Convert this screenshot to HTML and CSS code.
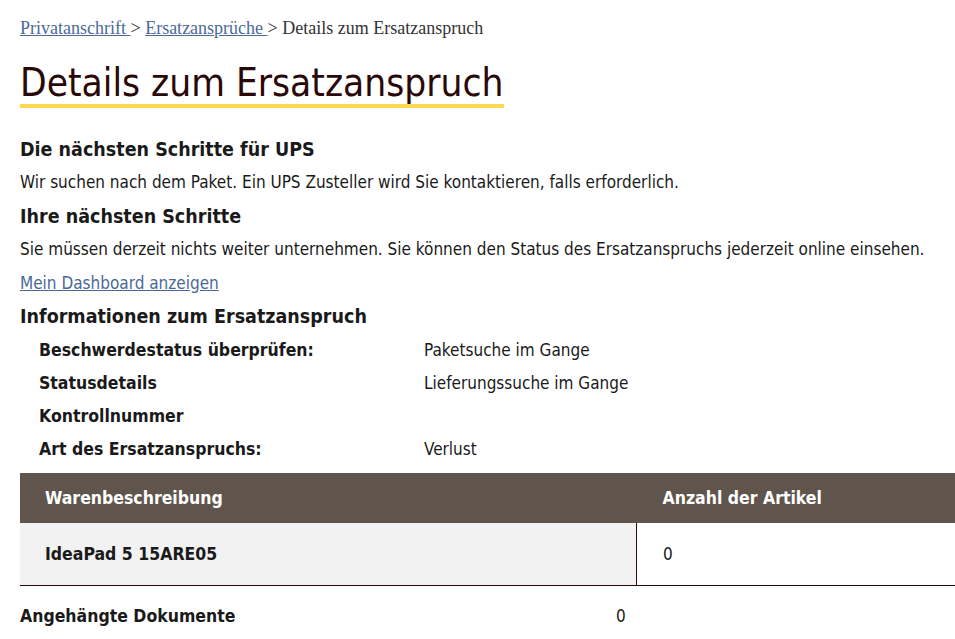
FILE: index.html
```html
<!DOCTYPE html>
<html>
<head>
    <title>Details zum Ersatzanspruch</title>
    <link rel="stylesheet" href="styles.css">
</head>
<body>
    <div class="page">
        <nav class="crumbs">
            <a href="#">Privatanschrift </a> &gt; <a href="#">Ersatzansprüche </a> &gt; <span>Details zum Ersatzanspruch</span>
        </nav>

        <h1 class="title">Details zum Ersatzanspruch</h1>

        <div class="content">
            <h2>Die nächsten Schritte für UPS</h2>
            <p>Wir suchen nach dem Paket. Ein UPS Zusteller wird Sie kontaktieren, falls erforderlich.</p>
            <h2 class="next">Ihre nächsten Schritte</h2>
            <p>Sie müssen derzeit nichts weiter unternehmen. Sie können den Status des Ersatzanspruchs jederzeit online einsehen.</p>
            <p class="dashboard"><a href="#" class="link">Mein Dashboard anzeigen</a></p>
            <h2>Informationen zum Ersatzanspruch</h2>

            <div class="info">
                <div class="info-label">Beschwerdestatus überprüfen:</div>
                <div class="info-value">Paketsuche im Gange</div>
                <div class="info-label">Statusdetails</div>
                <div class="info-value">Lieferungssuche im Gange</div>
                <div class="info-label">Kontrollnummer</div>
                <div class="info-value"></div>
                <div class="info-label">Art des Ersatzanspruchs:</div>
                <div class="info-value">Verlust</div>
            </div>

            <table class="items">
                <thead>
                    <tr>
                        <th class="col-desc">Warenbeschreibung</th>
                        <th>Anzahl der Artikel</th>
                    </tr>
                </thead>
                <tbody>
                    <tr>
                        <td class="col-desc">IdeaPad 5 15ARE05</td>
                        <td>0</td>
                    </tr>
                </tbody>
            </table>

            <div class="docs">
                <div class="docs-label">Angehängte Dokumente</div>
                <div class="docs-value">0</div>
            </div>
        </div>
    </div>
</body>
</html>
```

FILE: styles.css
```css
body {
    margin: 0;
    background: #fff;
    color: #1a1a1a;
    font-family: "DejaVu Sans Condensed", "DejaVu Sans", sans-serif;
    font-size: 17px;
}
.page {
    padding: 16px 0 0 20px;
}
.crumbs {
    font-family: "Liberation Serif", serif;
    font-size: 18px;
    line-height: 24px;
    color: #333;
}
.crumbs a {
    color: #4a6a96;
}
.title {
    display: inline-block;
    margin: 21px 0 0;
    font-size: 38.5px;
    font-weight: normal;
    line-height: 43px;
    color: #2a0808;
    border-bottom: 4px solid #fcd94f;
}
.content {
    margin-top: 25px;
}
h2 {
    margin: 0;
    font-size: 19.5px;
    line-height: 33px;
}
h2.next {
    margin-top: 1px;
}
p {
    margin: 0;
    line-height: 33px;
}
.dashboard {
    margin-top: 1px;
}
.link {
    color: #4a6a96;
}
.info {
    display: grid;
    grid-template-columns: 385px 1fr;
    margin-top: 1px;
    padding-left: 19px;
    line-height: 33px;
}
.info-label {
    font-weight: bold;
    font-size: 17.5px;
}
.items {
    width: 100%;
    margin-top: 7px;
    border-collapse: collapse;
}
.items th {
    height: 50px;
    padding: 0 26px;
    background: #5f554c;
    color: #fff;
    font-size: 17.5px;
    text-align: left;
}
.items td {
    height: 62px;
    padding: 0 26px;
    border-bottom: 1px solid #2a0808;
}
.items .col-desc {
    width: 565px;
    padding-left: 25px;
}
.items td.col-desc {
    background: #f2f2f2;
    font-weight: bold;
    font-size: 17.5px;
    border-right: 1px solid #2a0808;
}
.docs {
    display: flex;
    margin-top: 14px;
    line-height: 33px;
}
.docs-label {
    width: 596px;
    font-weight: bold;
    font-size: 17.5px;
}
```
